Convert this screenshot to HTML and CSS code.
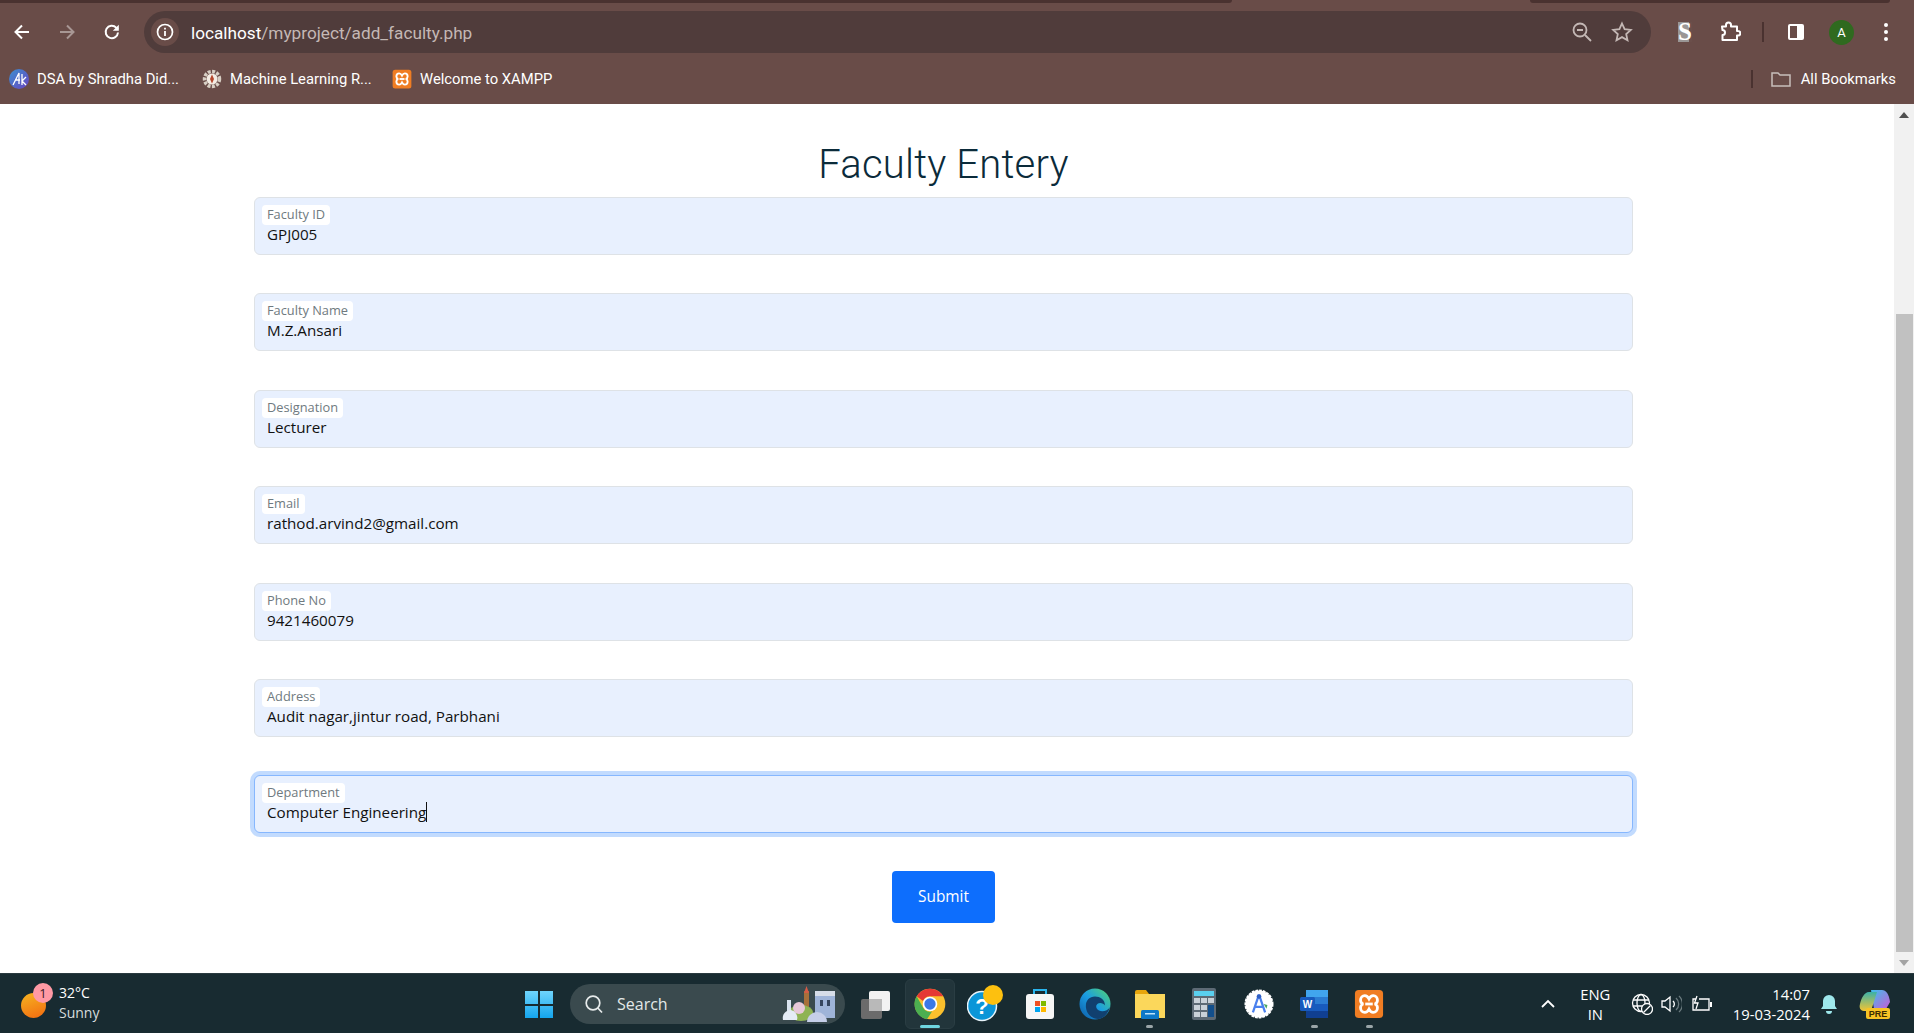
FILE: index.html
```html
<!DOCTYPE html>
<html lang="en">
<head>
<meta charset="utf-8">
<title>Faculty Entery</title>
<link rel="stylesheet" href="styles.css">
</head>
<body>
<svg class="defs" width="0" height="0" aria-hidden="true">
  <symbol id="xampp" viewBox="0 0 32 32">
    <rect x="1" y="1" width="30" height="30" rx="4" fill="#f07d23"/>
    <path d="M7 12c0-3 2-5 4.500-5s3.500 1.500 4.500 3.500c1-2 2-3.500 4.500-3.500S25 9 25 12c0 2-1 3.500-3 4 2 .5 3 2 3 4 0 3-2 5-4.500 5S17 23.500 16 21.500C15 23.500 14 25 11.500 25S7 23 7 20c0-2 1-3.500 3-4-2-.5-3-2-3-4z" fill="none" stroke="#fff" stroke-width="3"/>
    <path d="M12 16h8" stroke="#fff" stroke-width="3"/>
  </symbol>
</svg>

<div class="screen">
  <header class="browser">
    <div class="tabstrip">
      <span class="seg seg-a"></span><span class="seg seg-b"></span><span class="seg seg-c"></span><span class="seg seg-d"></span>
    </div>
    <div class="toolbar">
      <span class="tool tool-nav">
        <svg width="20" height="20" viewBox="0 0 20 20"><path d="M17 10H4M10 3.500 3.500 10l6.500 6.500" fill="none" stroke="#fff" stroke-width="2"/></svg>
      </span>
      <span class="tool tool-nav dim">
        <svg width="20" height="20" viewBox="0 0 20 20"><path d="M3 10h13M10 3.500l6.500 6.500-6.500 6.500" fill="none" stroke="#a89794" stroke-width="2"/></svg>
      </span>
      <span class="tool tool-nav">
        <svg width="20" height="20" viewBox="0 0 20 20"><path d="M16 10.500A6.200 6.200 0 1 1 14.200 5.600L16 7.400" fill="none" stroke="#fff" stroke-width="2"/><path d="M16.800 2.800v6h-6z" fill="#fff"/></svg>
      </span>
      <div class="omnibox">
        <span class="site-info">
          <svg width="18" height="18" viewBox="0 0 18 18"><circle cx="9" cy="9" r="7.500" fill="none" stroke="#fff" stroke-width="1.700"/><path d="M9 8v5M9 4.800v1.800" stroke="#fff" stroke-width="1.800"/></svg>
        </span>
        <span class="url"><span class="url-host">localhost</span>/myproject/add_faculty.php</span>
        <span class="omni-icon">
          <svg width="22" height="22" viewBox="0 0 22 22"><circle cx="9" cy="9" r="6.500" fill="none" stroke="#c4b8b5" stroke-width="1.800"/><path d="M6 9h6M14 14l6 6" stroke="#c4b8b5" stroke-width="1.800"/></svg>
        </span>
        <span class="omni-icon">
          <svg width="22" height="22" viewBox="0 0 22 22"><path d="m11 2.500 2.600 5.700 6.200.7-4.600 4.200 1.300 6.100L11 16.100l-5.500 3.100 1.300-6.100-4.600-4.200 6.200-.7z" fill="none" stroke="#c4b8b5" stroke-width="1.800"/></svg>
        </span>
      </div>
      <span class="tool tool-s">
        <svg width="16" height="22" viewBox="0 0 16 22"><rect x="1" y="1" width="14" height="20" fill="#9a9695"/><rect x="12" y="1" width="3" height="20" fill="#6b4f4b"/></svg>
        <b class="ext-s">S</b>
      </span>
      <span class="tool tool-ext">
        <svg width="22" height="22" viewBox="0 0 22 22"><path d="M3 6h4V4.500a2.500 2.500 0 0 1 5 0V6h6v4.500h1a2.300 2.300 0 0 1 0 4.600h-1V19.500H3.500v-5a2.500 2.500 0 0 0 0-5z" transform="translate(0 -.5)" fill="none" stroke="#fff" stroke-width="2" stroke-linejoin="round"/></svg>
      </span>
      <span class="vsep"></span>
      <span class="tool tool-panel">
        <svg width="20" height="20" viewBox="0 0 20 20"><rect x="2" y="2" width="16" height="16" rx="2" fill="#fff"/><rect x="4" y="4" width="7" height="12" fill="#694c48"/></svg>
      </span>
      <span class="avatar">A</span>
      <span class="tool tool-more">
        <svg width="6" height="20" viewBox="0 0 6 20"><circle cx="3" cy="3" r="2" fill="#fff"/><circle cx="3" cy="10" r="2" fill="#fff"/><circle cx="3" cy="17" r="2" fill="#fff"/></svg>
      </span>
    </div>
    <div class="bookmarks">
      <span class="bm bm-dsa">
        <svg width="20" height="20" viewBox="0 0 20 20"><defs><linearGradient id="dsa" x1="0" y1="0" x2="1" y2="1"><stop offset="0" stop-color="#3b8fd0"/><stop offset="1" stop-color="#6a45c0"/></linearGradient></defs><circle cx="10" cy="10" r="10" fill="url(#dsa)"/><path d="M4 16 10 4v11M6 11h5M13 5v11M17 8l-4 4 4 4" fill="none" stroke="#fff" stroke-width="1.300"/></svg>
        DSA by Shradha Did...
      </span>
      <span class="bm bm-ml">
        <svg width="20" height="20" viewBox="0 0 20 20"><circle cx="10" cy="10" r="7.500" fill="none" stroke="#d8cfc4" stroke-width="3.500" stroke-dasharray="3 1.400"/><circle cx="10" cy="10" r="5.500" fill="#f4ede4"/><path d="M10 5.500 12 10l-2 4.500L8 10z" fill="#b5472c"/></svg>
        Machine Learning R...
      </span>
      <span class="bm bm-xampp">
        <svg width="20" height="20"><use href="#xampp"/></svg>
        Welcome to XAMPP
      </span>
      <span class="bm-sep"></span>
      <span class="bm bm-all">
        <svg width="20" height="18" viewBox="0 0 20 18"><path d="M1 3h6l2 2h10v11H1z" fill="none" stroke="#c8bebb" stroke-width="1.500"/></svg>
        All Bookmarks
      </span>
    </div>
  </header>

  <div class="viewport">
    <main class="page">
      <h1 class="title">Faculty Entery</h1>
      <form class="form">
        <div class="field"><span class="chip">Faculty ID</span><span class="value">GPJ005</span></div>
        <div class="field"><span class="chip">Faculty Name</span><span class="value">M.Z.Ansari</span></div>
        <div class="field"><span class="chip">Designation</span><span class="value">Lecturer</span></div>
        <div class="field"><span class="chip">Email</span><span class="value">rathod.arvind2@gmail.com</span></div>
        <div class="field"><span class="chip">Phone No</span><span class="value">9421460079</span></div>
        <div class="field"><span class="chip">Address</span><span class="value">Audit nagar,jintur road, Parbhani</span></div>
        <div class="field field-focus"><span class="chip">Department</span><span class="value value-caret">Computer Engineering</span></div>
        <div class="actions"><button type="button" class="submit">Submit</button></div>
      </form>
    </main>
    <div class="scrollbar">
      <span class="sb-arrow"><svg width="10" height="6" viewBox="0 0 10 6"><path d="M5 0l5 6H0z" fill="#505050"/></svg></span>
      <span class="sb-track"><span class="sb-thumb"></span></span>
      <span class="sb-arrow"><svg width="10" height="6" viewBox="0 0 10 6"><path d="M0 0h10L5 6z" fill="#a3a3a3"/></svg></span>
    </div>
  </div>

  <footer class="taskbar">
    <div class="weather">
      <span class="sun"><span class="badge">1</span></span>
      <span class="weather-text"><span>32°C</span><span class="muted">Sunny</span></span>
    </div>
    <div class="apps">
      <span class="winlogo">
        <svg width="30" height="30" viewBox="0 0 30 30"><defs><linearGradient id="win" x1="0" y1="0" x2="0" y2="1"><stop offset="0" stop-color="#6fd4fb"/><stop offset="1" stop-color="#14a5ee"/></linearGradient></defs><path d="M1 2h13v13H1zM16 2h13v13H16zM1 17h13v12H1zM16 17h13v12H16z" fill="url(#win)"/></svg>
      </span>
      <div class="search">
        <svg width="20" height="20" viewBox="0 0 20 20"><circle cx="9" cy="9" r="6.800" fill="none" stroke="#e8ecec" stroke-width="1.700"/><path d="m13.800 14 4.200 4.500" stroke="#e8ecec" stroke-width="1.700"/></svg>
        <span class="search-text">Search</span>
        <svg class="search-art" width="56" height="36" viewBox="0 0 56 36"><rect x="34" y="7" width="20" height="25" fill="#9fb4d8"/><path d="M34 5h20v5H34z" fill="#d7dde8"/><rect x="39" y="14" width="3" height="6" fill="#36465e"/><rect x="46" y="14" width="3" height="6" fill="#36465e"/><rect x="23" y="5" width="5" height="24" fill="#a8703a"/><path d="M25.500 0 28 7h-5z" fill="#d55b46"/><ellipse cx="20" cy="27" rx="12" ry="8" fill="#8fb353"/><circle cx="18" cy="22" r="6" fill="#e8c8d8"/><rect x="6" y="14" width="4" height="18" fill="#d9e3ee"/><path d="M2 34a8 8 0 0 1 8-10 8 8 0 0 1 6 10z" fill="#e5ecf5"/><path d="M26 36a10 10 0 0 1 20 0z" fill="#c6cfe8"/></svg>
      </div>
      <span class="app">
        <svg width="32" height="32" viewBox="0 0 32 32"><rect x="10" y="3" width="21" height="20" rx="2" fill="#f2f2f2"/><rect x="2" y="11" width="21" height="20" rx="2" fill="#6b6b6b"/><rect x="10" y="11" width="13" height="12" fill="#b9b9b9"/></svg>
      </span>
      <span class="app app-active">
        <svg class="app-icon" width="32" height="32" viewBox="0 0 48 48"><circle cx="24" cy="24" r="23" fill="#fbc02d"/><path d="M24 1a23 23 0 0 1 20 11.500H24a11.500 11.500 0 0 0-10.500 7L4 12.500A23 23 0 0 1 24 1z" fill="#e53935"/><path d="M4 12.500l10 17.500a11.500 11.500 0 0 0 13 5.100L19.500 47A23 23 0 0 1 4 12.500z" fill="#4caf50"/><circle cx="24" cy="24" r="11" fill="#fff"/><circle cx="24" cy="24" r="8.500" fill="#3b78e7"/></svg>
        <span class="run run-active"></span>
      </span>
      <span class="app">
        <svg width="36" height="38" viewBox="0 0 36 38"><circle cx="15" cy="21" r="14.500" fill="#0b96d8" stroke="#e8f4fa" stroke-width="1.500"/><text x="15" y="29" class="help-mark">?</text><circle cx="26" cy="10" r="10" fill="#fdc00f"/></svg>
      </span>
      <span class="app">
        <svg width="30" height="32" viewBox="0 0 30 32"><path d="M9 6V2h12v4" fill="none" stroke="#2ab5ee" stroke-width="2"/><rect x="1" y="6" width="28" height="25" rx="3" fill="#f6f6f6"/><path d="M10 13h5v5h-5z" fill="#f05022"/><path d="M16 13h5v5h-5z" fill="#7fba00"/><path d="M10 19h5v5h-5z" fill="#00a4ef"/><path d="M16 19h5v5h-5z" fill="#ffb900"/></svg>
      </span>
      <span class="app">
        <svg width="32" height="32" viewBox="0 0 32 32"><defs><linearGradient id="edge" x1="0" y1="1" x2="1" y2="0"><stop offset="0" stop-color="#0c59a4"/><stop offset=".5" stop-color="#1b9de2"/><stop offset="1" stop-color="#54d66d"/></linearGradient></defs><circle cx="16" cy="16" r="15.500" fill="url(#edge)"/><path d="M31 19c-2 4-8 5-11 3.500-3-1.500-4-5-1-7 2-1.500 6 0 7 2 0-6-5-9-10-9C10 8.500 6 13 7 20c1 7 7 11 12 11 5 0 10-5 12-12z" fill="#11406f"/></svg>
      </span>
      <span class="app">
        <svg width="32" height="30" viewBox="0 0 32 30"><path d="M1 3a2 2 0 0 1 2-2h9l3 4h16v24H1z" fill="#e8a60c"/><rect x="1" y="5" width="30" height="24" fill="#fbd75b"/><rect x="7" y="21" width="18" height="9" rx="1.500" fill="#0f78c8"/><rect x="11" y="24" width="10" height="1.500" fill="#bfe3fa"/></svg>
        <span class="run"></span>
      </span>
      <span class="app">
        <svg width="24" height="32" viewBox="0 0 24 32"><rect width="24" height="32" rx="2" fill="#5d6a75"/><rect x="2" y="3" width="20" height="5" fill="#5ad0ef"/><path d="M2 10h6v5H2zM9 10h6v5H9zM16 10h6v5h-6zM2 17h6v5H2zM9 17h6v5H9zM2 24h6v5H2zM9 24h6v5H9z" fill="#c9d1d8"/><path d="M16 17h6v12h-6z" fill="#124f8c"/></svg>
      </span>
      <span class="app">
        <svg width="30" height="30" viewBox="0 0 32 32"><circle cx="16" cy="16" r="14.500" fill="#fff" stroke="#fff" stroke-width="2" stroke-dasharray="3 1"/><path d="M16 6 9.500 25M16 6l6.500 19M11 19h10" fill="none" stroke="#4a80ee" stroke-width="2.400"/><circle cx="16" cy="8" r="2.500" fill="#2f5fc4"/><path d="M21 16l4 1-1 4z" fill="#4aa564"/></svg>
      </span>
      <span class="app">
        <svg width="30" height="30" viewBox="0 0 30 30"><rect x="7" y="1" width="22" height="28" rx="2" fill="#2b7cd3"/><rect x="7" y="1" width="22" height="7" fill="#41a5ee"/><rect x="7" y="15" width="22" height="7" fill="#185abd"/><rect x="7" y="22" width="22" height="7" fill="#103f91"/><rect x="1" y="8" width="15" height="14" rx="1.500" fill="#185abd"/><text x="8.500" y="19" class="word-mark">W</text></svg>
        <span class="run"></span>
      </span>
      <span class="app">
        <svg width="30" height="30"><use href="#xampp"/></svg>
        <span class="run"></span>
      </span>
    </div>
    <div class="tray">
      <svg class="tray-chevron" width="16" height="10" viewBox="0 0 16 10"><path d="m2 8 6-6 6 6" fill="none" stroke="#fff" stroke-width="1.800"/></svg>
      <span class="lang"><span>ENG</span><span>IN</span></span>
      <svg class="tray-globe" width="22" height="22" viewBox="0 0 22 22"><g fill="none" stroke="#fff" stroke-width="1.300"><circle cx="10" cy="10" r="8.500"/><ellipse cx="10" cy="10" rx="4" ry="8.500"/><path d="M2 7h16M2 13h16"/></g><circle cx="16" cy="16" r="5.500" fill="#182b31" stroke="#fff" stroke-width="1.300"/><path d="m12.500 19.500 7-7" stroke="#fff" stroke-width="1.300"/></svg>
      <svg class="tray-sound" width="22" height="20" viewBox="0 0 22 20"><path d="M2 7h3l5-4v14l-5-4H2z" fill="none" stroke="#fff" stroke-width="1.300"/><path d="M13 7a4 4 0 0 1 0 6" fill="none" stroke="#fff" stroke-width="1.300"/><path d="M16 4a8 8 0 0 1 0 12M19 2a11 11 0 0 1 0 16" fill="none" stroke="#6a7a7e" stroke-width="1.300"/></svg>
      <svg class="tray-battery" width="22" height="18" viewBox="0 0 22 18"><path d="M5 4H2v11h16V4H8" fill="none" stroke="#fff" stroke-width="1.300"/><rect x="19" y="7" width="2" height="5" fill="#fff"/><path d="M6 1 3.500 8H7l-2 6" fill="none" stroke="#fff" stroke-width="1.300"/></svg>
      <span class="clock"><span>14:07</span><span>19-03-2024</span></span>
      <svg class="tray-bell" width="18" height="20" viewBox="0 0 18 20"><path d="M9 1a6 6 0 0 1 6 6v5l2 3H1l2-3V7a6 6 0 0 1 6-6z" fill="#9ee8ec"/><path d="M6 17h6a3 3 0 0 1-6 0z" fill="#9ee8ec"/></svg>
      <svg class="tray-copilot" width="32" height="30" viewBox="0 0 32 30"><defs><linearGradient id="cp1" x1="0" y1="0" x2="1" y2="1"><stop offset="0" stop-color="#3cc0ee"/><stop offset="1" stop-color="#c75bd6"/></linearGradient><linearGradient id="cp2" x1="0" y1="0" x2="0" y2="1"><stop offset="0" stop-color="#3bb1a8"/><stop offset="1" stop-color="#f3c532"/></linearGradient></defs><path d="M12 1h11c4 0 7 4 8 12l-4 7H15z" fill="url(#cp1)"/><path d="M10 3h8l-6 19H5c-4 0-5-4-4-7 1-5 4-12 9-12z" fill="url(#cp2)"/><rect x="7" y="19" width="24" height="11" rx="2" fill="#f7c325"/><text x="19" y="28" class="pre-mark">PRE</text></svg>
    </div>
  </footer>
</div>
</body>
</html>
```

FILE: styles.css
```css
* { box-sizing: border-box; }

html, body {
  margin: 0;
  height: 100%;
  overflow: hidden;
}

body {
  background: #fff;
  font-family: "Open Sans", "Noto Sans", sans-serif;
}

.defs { position: absolute; }

.screen {
  display: flex;
  flex-direction: column;
  height: 1033px;
  width: 1914px;
}

/* Browser chrome */
.browser {
  background: #694c48;
  height: 104px;
  flex: none;
  color: #fff;
  font-family: Roboto, "Liberation Sans", sans-serif;
}

.tabstrip {
  display: flex;
  height: 3px;
}

.seg { display: block; height: 3px; }
.seg-a { width: 1232px; background: #4a3230; border-bottom-right-radius: 3px; }
.seg-b { width: 298px; }
.seg-c { width: 360px; background: #4a3230; border-bottom-left-radius: 3px; border-bottom-right-radius: 3px; }
.seg-d { flex: 1; }

.toolbar {
  display: flex;
  align-items: center;
  height: 42px;
  margin-top: 8px;
}

.tool {
  display: flex;
  align-items: center;
  justify-content: center;
  flex: none;
}

.tool-nav { width: 45px; height: 42px; }
.tool-nav:first-child { width: 44px; }

.omnibox {
  display: flex;
  align-items: center;
  width: 1507px;
  height: 42px;
  margin-left: 10px;
  border-radius: 21px;
  background: #503c3b;
  padding: 0 9px 0 7px;
  flex: none;
}

.site-info {
  display: flex;
  align-items: center;
  justify-content: center;
  width: 28px;
  height: 28px;
  border-radius: 50%;
  background: #694c48;
  flex: none;
}

.url {
  margin: 1px 0 0 12px;
  font-size: 17.200px;
  color: #c4b8b5;
  flex: 1;
  white-space: nowrap;
}

.url-host { color: #fff; }

.omni-icon {
  display: flex;
  width: 40px;
  justify-content: center;
  flex: none;
}

.tool-s {
  position: relative;
  width: 28px;
  height: 28px;
  margin-left: 20px;
}

.ext-s {
  position: absolute;
  inset: 0;
  text-align: center;
  font: 700 25px/28px "Liberation Serif", serif;
  color: #fff;
}

.tool-ext { width: 28px; margin-left: 17px; }

.vsep {
  width: 2px;
  height: 20px;
  background: #4a3230;
  margin-left: 18px;
  flex: none;
}

.tool-panel { width: 24px; margin-left: 20px; }

.avatar {
  display: flex;
  align-items: center;
  justify-content: center;
  width: 25px;
  height: 25px;
  margin-left: 21px;
  border-radius: 50%;
  background: #2f6a1f;
  font-size: 13px;
  flex: none;
}

.tool-more { width: 10px; margin-left: 27px; }

.bookmarks {
  display: flex;
  align-items: center;
  height: 51px;
  font-size: 14.800px;
}

.bm {
  display: flex;
  align-items: center;
  gap: 8px;
  white-space: nowrap;
  flex: none;
}

.bm-dsa { margin-left: 9px; width: 193px; }
.bm-ml { width: 190px; }
.bm-sep {
  width: 2px;
  height: 18px;
  background: #4a3230;
  margin-left: auto;
  flex: none;
}
.bm-all { margin-left: 18px; margin-right: 18px; gap: 10px; }

/* Page */
.viewport {
  display: flex;
  flex: 1;
  min-height: 0;
}

.page {
  flex: 1;
  padding: 37px 0 0 254px;
}

.title {
  width: 1379px;
  margin: 0 0 8px;
  height: 48px;
  text-align: center;
  font: 300 40px/48px Roboto, sans-serif;
  letter-spacing: .2px;
  color: #0b2b3a;
}

.form {
  display: flex;
  flex-direction: column;
  gap: 38.400px;
  width: 1379px;
}

.field {
  display: flex;
  flex-direction: column;
  align-items: flex-start;
  height: 58px;
  padding: 7px 0 0 7px;
  background: #e8f0fe;
  border: 1px solid #dee2e6;
  border-radius: 6px;
}

.field-focus {
  border-color: #86b7fe;
  box-shadow: 0 0 0 4px #c2dbfe;
}

.chip {
  height: 20px;
  padding: 0 5px;
  background: #fff;
  border-radius: 4px;
  font-size: 12.800px;
  line-height: 18.500px;
  color: #6f7a80;
}

.value {
  margin: -1px 0 0 5px;
  font-size: 15.200px;
  line-height: 20px;
  color: #111;
}

.value-caret { border-right: 1px solid #111; }

.actions {
  display: flex;
  justify-content: center;
  margin-top: -1px;
}

.submit {
  width: 103px;
  height: 52px;
  padding: 0;
  border: 0;
  border-radius: 4px;
  background: #0d6efd;
  color: #fff;
  font: 500 15.400px "Open Sans", sans-serif;
}

.scrollbar {
  display: flex;
  flex-direction: column;
  width: 20px;
  background: #f1f1f1;
  flex: none;
}

.sb-arrow {
  display: flex;
  align-items: center;
  justify-content: center;
  height: 21px;
  flex: none;
}

.sb-track {
  display: flex;
  flex: 1;
  align-items: flex-end;
  justify-content: center;
}

.sb-thumb {
  display: block;
  width: 17px;
  height: 638px;
  background: #c1c1c1;
}

/* Taskbar */
.taskbar {
  display: grid;
  grid-template-columns: 524px auto 1fr;
  height: 60px;
  flex: none;
  background: #182b31;
  border-top: 1px solid #2a3a3f;
  color: #fff;
  font-family: "Open Sans", sans-serif;
  align-items: center;
}

.weather {
  display: flex;
  align-items: center;
  padding-left: 21px;
}

.sun {
  position: relative;
  display: block;
  width: 25px;
  height: 25px;
  border-radius: 50%;
  background: linear-gradient(160deg, #f6b521, #f26a10);
  margin-top: 4px;
}

.badge {
  position: absolute;
  left: 12px;
  top: -10px;
  width: 20px;
  height: 20px;
  border-radius: 50%;
  background: #ff99a4;
  color: #3a1a1e;
  font-size: 13px;
  line-height: 20px;
  text-align: center;
}

.weather-text {
  display: flex;
  flex-direction: column;
  margin-left: 13px;
  font-size: 14px;
  line-height: 20px;
  margin-top: -2px;
}

.muted { color: #d6dcdd; }

.apps {
  display: flex;
  align-items: center;
}

.winlogo { display: flex; width: 30px; }

.search {
  display: flex;
  align-items: center;
  width: 275px;
  height: 40px;
  margin-left: 16px;
  margin-right: 3px;
  padding-left: 14px;
  border-radius: 20px;
  background: #3a4a4e;
  font-size: 16px;
  color: #e3e8e8;
}

.search-text { margin-left: 13px; flex: 1; }

.search-art { margin-right: 8px; }

.app {
  position: relative;
  display: flex;
  align-items: center;
  justify-content: center;
  width: 54.850px;
  height: 50px;
  flex: none;
}

.app-active::before {
  content: "";
  position: absolute;
  inset: 0 2.500px;
  background: #22353b;
  border: 1px solid #2a3d43;
  border-radius: 6px;
}

.app-icon { position: relative; }

.run {
  position: absolute;
  left: 50%;
  bottom: 1px;
  width: 7px;
  height: 3px;
  margin-left: -3.500px;
  border-radius: 2px;
  background: #9aa5a8;
}

.run-active {
  width: 20px;
  margin-left: -10px;
  background: #6fd6e0;
}

.help-mark {
  font: 700 22px "Liberation Sans", sans-serif;
  fill: #fff;
  text-anchor: middle;
}

.word-mark {
  font: 700 10px "Liberation Sans", sans-serif;
  fill: #fff;
  text-anchor: middle;
}

.pre-mark {
  font: 700 9px "Liberation Sans", sans-serif;
  fill: #3a2a00;
  text-anchor: middle;
}

.tray {
  display: flex;
  align-items: center;
  font-size: 14.800px;
  margin-left: auto;
  padding-right: 23px;
}

.tray-chevron { margin-right: 21px; }

.lang {
  display: flex;
  flex-direction: column;
  align-items: center;
  width: 36px;
  line-height: 20px;
}

.tray-globe { margin-left: 18px; }
.tray-sound { margin-left: 7px; }
.tray-battery { margin-left: 9px; }

.clock {
  display: flex;
  flex-direction: column;
  align-items: flex-end;
  line-height: 20px;
  margin-left: 19.500px;
}

.tray-bell { margin-left: 10px; }
.tray-copilot { margin-left: 21px; }
```
